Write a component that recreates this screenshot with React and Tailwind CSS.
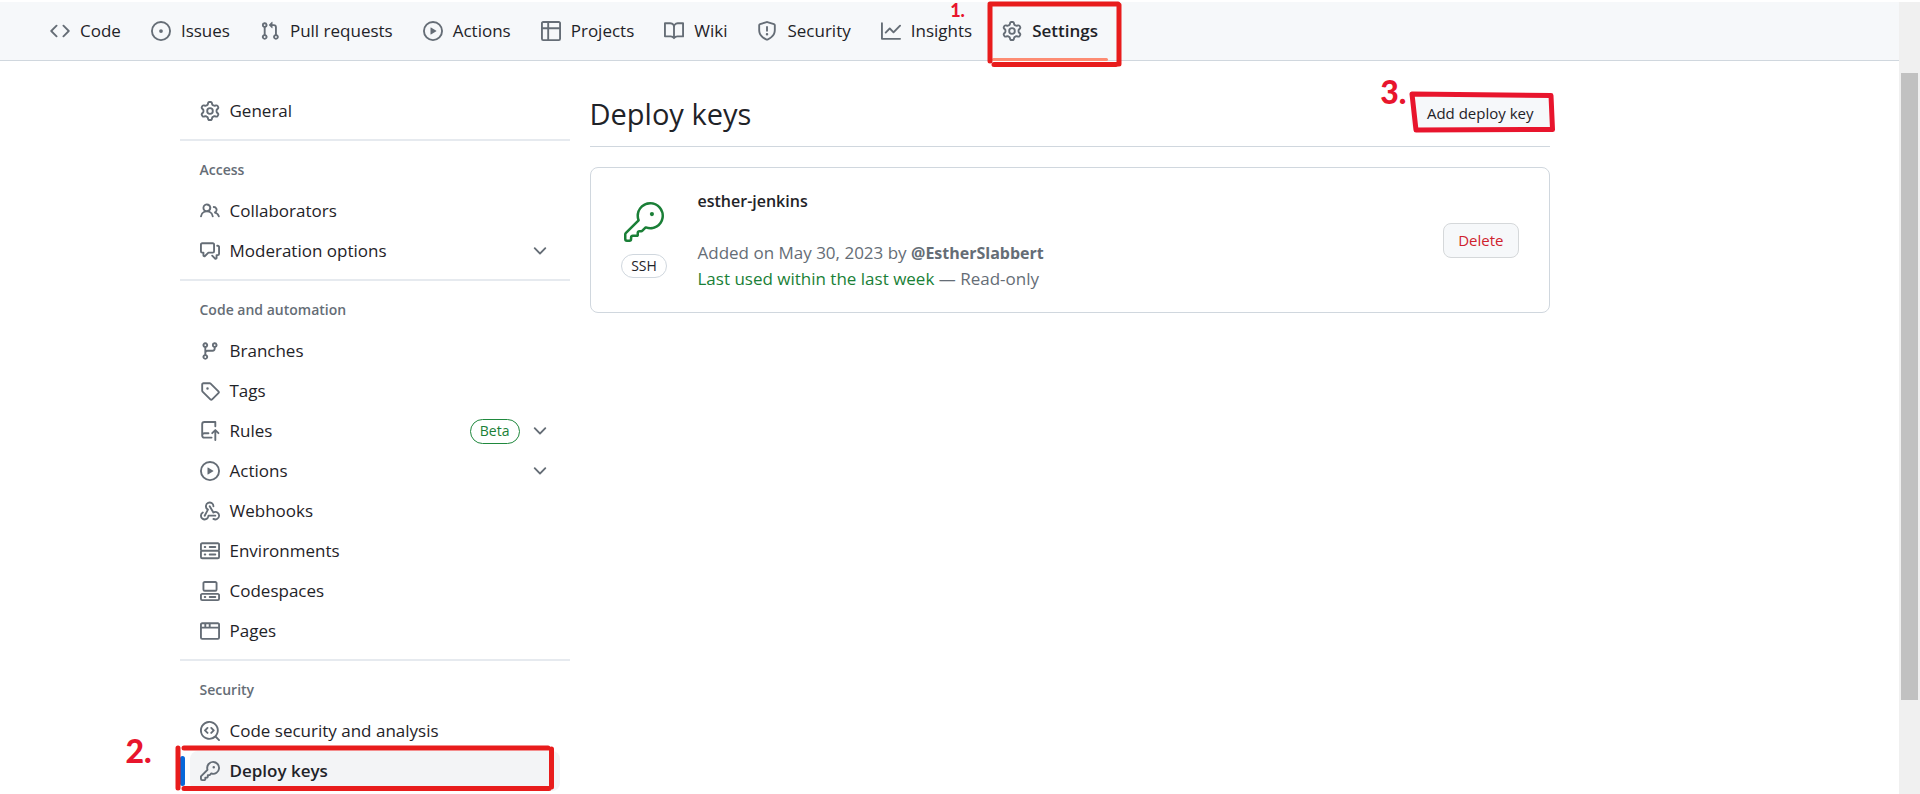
import { GoKey } from "react-icons/go";

const ICONS = {
  code: "m11.28 3.22 4.25 4.25a.75.75 0 0 1 0 1.06l-4.25 4.25a.749.749 0 0 1-1.275-.326.749.749 0 0 1 .215-.734L13.94 8l-3.72-3.72a.749.749 0 0 1 .326-1.275.749.749 0 0 1 .734.215Zm-6.56 0a.751.751 0 0 1 1.042.018.751.751 0 0 1 .018 1.042L2.06 8l3.72 3.72a.749.749 0 0 1-.326 1.275.749.749 0 0 1-.734-.215L.47 8.53a.75.75 0 0 1 0-1.06Z",
  issue: "M8 9.5a1.5 1.5 0 1 0 0-3 1.5 1.5 0 0 0 0 3Z M8 0a8 8 0 1 1 0 16A8 8 0 0 1 8 0ZM1.5 8a6.5 6.5 0 1 0 13 0 6.5 6.5 0 0 0-13 0Z",
  pull: "M1.5 3.25a2.25 2.25 0 1 1 3 2.122v5.256a2.251 2.251 0 1 1-1.5 0V5.372A2.25 2.25 0 0 1 1.5 3.25Zm5.677-.177L9.573.677A.25.25 0 0 1 10 .854V2.5h1A2.5 2.5 0 0 1 13.5 5v5.628a2.251 2.251 0 1 1-1.5 0V5a1 1 0 0 0-1-1h-1v1.646a.25.25 0 0 1-.427.177L7.177 3.427a.25.25 0 0 1 0-.354ZM3.75 2.5a.75.75 0 1 0 0 1.5.75.75 0 0 0 0-1.5Zm0 9.5a.75.75 0 1 0 0 1.5.75.75 0 0 0 0-1.5Zm8.25.75a.75.75 0 1 0 1.5 0 .75.75 0 0 0-1.5 0Z",
  play: "M8 0a8 8 0 1 1 0 16A8 8 0 0 1 8 0ZM1.5 8a6.5 6.5 0 1 0 13 0 6.5 6.5 0 0 0-13 0Zm4.879-2.773 4.264 2.559a.25.25 0 0 1 0 .428l-4.264 2.559A.25.25 0 0 1 6 10.559V5.442a.25.25 0 0 1 .379-.215Z",
  table: "M0 1.75C0 .784.784 0 1.75 0h12.5C15.216 0 16 .784 16 1.75v12.5A1.75 1.75 0 0 1 14.25 16H1.75A1.75 1.75 0 0 1 0 14.25ZM6.5 6.5v8h7.75a.25.25 0 0 0 .25-.25V6.5Zm8-1.5V1.75a.25.25 0 0 0-.25-.25H6.5V5Zm-13 1.5v7.75c0 .138.112.25.25.25H5v-8ZM5 5V1.5H1.75a.25.25 0 0 0-.25.25V5Z",
  book: "M0 1.75A.75.75 0 0 1 .75 1h4.253c1.227 0 2.317.59 3 1.501A3.743 3.743 0 0 1 11.006 1h4.245a.75.75 0 0 1 .75.75v10.5a.75.75 0 0 1-.75.75h-4.507a2.25 2.25 0 0 0-1.591.659l-.622.621a.75.75 0 0 1-1.06 0l-.622-.621A2.25 2.25 0 0 0 5.258 13H.75a.75.75 0 0 1-.75-.75Zm7.251 10.324.004-5.073-.002-2.253A2.25 2.25 0 0 0 5.003 2.5H1.5v9h3.757a3.75 3.75 0 0 1 1.994.574ZM8.755 4.75l-.004 7.322a3.752 3.752 0 0 1 1.992-.572H14.5v-9h-3.495a2.25 2.25 0 0 0-2.25 2.25Z",
  shield: "M7.467.133a1.748 1.748 0 0 1 1.066 0l5.25 1.68A1.75 1.75 0 0 1 15 3.48V7c0 1.566-.32 3.182-1.303 4.682-.983 1.498-2.585 2.813-5.032 3.855a1.697 1.697 0 0 1-1.33 0c-2.447-1.042-4.049-2.357-5.032-3.855C1.32 10.182 1 8.566 1 7V3.48a1.75 1.75 0 0 1 1.217-1.667Zm.61 1.429a.25.25 0 0 0-.153 0l-5.25 1.68a.25.25 0 0 0-.174.238V7c0 1.358.275 2.666 1.057 3.86.784 1.194 2.121 2.34 4.366 3.297a.196.196 0 0 0 .154 0c2.245-.956 3.582-2.104 4.366-3.298C13.225 9.666 13.5 8.36 13.5 7V3.48a.251.251 0 0 0-.174-.237l-5.25-1.68ZM8.75 4.75v3a.75.75 0 0 1-1.5 0v-3a.75.75 0 0 1 1.5 0ZM9 10.5a1 1 0 1 1-2 0 1 1 0 0 1 2 0Z",
  graph: "M1.5 1.75V13.5h13.75a.75.75 0 0 1 0 1.5H.75a.75.75 0 0 1-.75-.75V1.75a.75.75 0 0 1 1.5 0Zm14.28 2.53-5.25 5.25a.75.75 0 0 1-1.06 0L7 7.06 4.28 9.78a.751.751 0 0 1-1.042-.018.751.751 0 0 1-.018-1.042l3.25-3.25a.75.75 0 0 1 1.06 0L10 7.94l4.72-4.72a.751.751 0 0 1 1.042.018.751.751 0 0 1 .018 1.042Z",
  gear: "M8 0a8.2 8.2 0 0 1 .701.031C9.444.095 9.99.645 10.16 1.29l.288 1.107c.018.066.079.158.212.224.231.114.454.243.668.386.123.082.233.09.299.071l1.103-.303c.644-.176 1.392.021 1.82.63.27.385.506.792.704 1.218.315.675.111 1.422-.364 1.891l-.814.806c-.049.048-.098.147-.088.294.016.257.016.515 0 .772-.01.147.038.246.088.294l.814.806c.475.469.679 1.216.364 1.891a7.977 7.977 0 0 1-.704 1.217c-.428.61-1.176.807-1.82.63l-1.102-.302c-.067-.019-.177-.011-.3.071a5.909 5.909 0 0 1-.668.386c-.133.066-.194.158-.211.224l-.29 1.106c-.168.646-.715 1.196-1.458 1.26a8.006 8.006 0 0 1-1.402 0c-.743-.064-1.289-.614-1.458-1.26l-.289-1.106c-.018-.066-.079-.158-.212-.224a5.738 5.738 0 0 1-.668-.386c-.123-.082-.233-.09-.299-.071l-1.103.303c-.644.176-1.392-.021-1.82-.63a8.12 8.12 0 0 1-.704-1.218c-.315-.675-.111-1.422.363-1.891l.815-.806c.05-.048.098-.147.088-.294a6.214 6.214 0 0 1 0-.772c.01-.147-.038-.246-.088-.294l-.815-.806C.635 6.045.431 5.298.746 4.623a7.92 7.92 0 0 1 .704-1.217c.428-.61 1.176-.807 1.82-.63l1.102.302c.067.019.177.011.3-.071.214-.143.437-.272.668-.386.133-.066.194-.158.211-.224l.29-1.106C6.009.645 6.556.095 7.299.03 7.53.01 7.764 0 8 0Zm-.571 1.525c-.036.003-.108.036-.137.146l-.289 1.105c-.147.561-.549.967-.998 1.189-.173.086-.34.183-.5.29-.417.278-.97.423-1.529.27l-1.103-.303c-.109-.03-.175.016-.195.045-.22.312-.412.644-.573.99-.014.031-.021.11.059.19l.815.806c.411.406.562.957.53 1.456a4.709 4.709 0 0 0 0 .582c.032.499-.119 1.05-.53 1.456l-.815.806c-.081.08-.073.159-.059.19.162.346.353.677.573.989.02.03.085.076.195.046l1.102-.303c.56-.153 1.113-.008 1.53.27.161.107.328.204.501.29.447.222.85.629.997 1.189l.289 1.105c.029.109.101.143.137.146a6.6 6.6 0 0 0 1.142 0c.036-.003.108-.036.137-.146l.289-1.105c.147-.561.549-.967.998-1.189.173-.086.34-.183.5-.29.417-.278.97-.423 1.529-.27l1.103.303c.109.029.175-.016.195-.045.22-.313.411-.644.573-.99.014-.031.021-.11-.059-.19l-.815-.806c-.411-.406-.562-.957-.53-1.456a4.709 4.709 0 0 0 0-.582c-.032-.499.119-1.05.53-1.456l.815-.806c.081-.08.073-.159.059-.19a6.464 6.464 0 0 0-.573-.989c-.02-.03-.085-.076-.195-.046l-1.102.303c-.56.153-1.113.008-1.53-.27a4.44 4.44 0 0 0-.501-.29c-.447-.222-.85-.629-.997-1.189l-.289-1.105c-.029-.11-.101-.143-.137-.146a6.6 6.6 0 0 0-1.142 0ZM11 8a3 3 0 1 1-6 0 3 3 0 0 1 6 0ZM9.5 8a1.5 1.5 0 1 0-3.001.001A1.5 1.5 0 0 0 9.5 8Z",
  people: "M2 5.5a3.5 3.5 0 1 1 5.898 2.549 5.508 5.508 0 0 1 3.034 4.084.75.75 0 1 1-1.482.235 4 4 0 0 0-7.9 0 .75.75 0 0 1-1.482-.236A5.507 5.507 0 0 1 3.102 8.05 3.493 3.493 0 0 1 2 5.5ZM11 4a3.001 3.001 0 0 1 2.22 5.018 5.01 5.01 0 0 1 2.56 3.012.749.749 0 0 1-.885.954.752.752 0 0 1-.549-.514 3.507 3.507 0 0 0-2.522-2.372.75.75 0 0 1-.574-.73v-.352a.75.75 0 0 1 .416-.672A1.5 1.5 0 0 0 11 5.5.75.75 0 0 1 11 4Zm-5.5-.5a2 2 0 1 0-.001 3.999A2 2 0 0 0 5.5 3.5Z",
  discussion: "M1.75 1h8.5c.966 0 1.75.784 1.75 1.75v5.5A1.75 1.75 0 0 1 10.25 10H7.061l-2.574 2.573A1.458 1.458 0 0 1 2 11.543V10h-.25A1.75 1.75 0 0 1 0 8.25v-5.5C0 1.784.784 1 1.75 1ZM1.5 2.75v5.5c0 .138.112.25.25.25h1a.75.75 0 0 1 .75.75v2.19l2.72-2.72a.749.749 0 0 1 .53-.22h3.5a.25.25 0 0 0 .25-.25v-5.5a.25.25 0 0 0-.25-.25h-8.5a.25.25 0 0 0-.25.25Zm13 2a.25.25 0 0 0-.25-.25h-.5a.75.75 0 0 1 0-1.5h.5c.966 0 1.75.784 1.75 1.75v5.5A1.75 1.75 0 0 1 14.25 12H14v1.543a1.458 1.458 0 0 1-2.487 1.03L9.22 12.28a.749.749 0 0 1 .326-1.275.749.749 0 0 1 .734.215l2.22 2.22v-2.19a.75.75 0 0 1 .75-.75h1a.25.25 0 0 0 .25-.25Z",
  branch: "M9.5 3.25a2.25 2.25 0 1 1 3 2.122V6A2.5 2.5 0 0 1 10 8.5H6a1 1 0 0 0-1 1v1.128a2.251 2.251 0 1 1-1.5 0V5.372a2.25 2.25 0 1 1 1.5 0v1.836A2.493 2.493 0 0 1 6 7h4a1 1 0 0 0 1-1v-.628A2.25 2.25 0 0 1 9.5 3.25Zm-6 0a.75.75 0 1 0 1.5 0 .75.75 0 0 0-1.5 0Zm8.25-.75a.75.75 0 1 0 0 1.5.75.75 0 0 0 0-1.5ZM4.25 12a.75.75 0 1 0 0 1.5.75.75 0 0 0 0-1.5Z",
  tag: "M1 7.775V2.75C1 1.784 1.784 1 2.75 1h5.025c.464 0 .91.184 1.238.513l6.25 6.25a1.75 1.75 0 0 1 0 2.474l-5.026 5.026a1.75 1.75 0 0 1-2.474 0l-6.25-6.25A1.752 1.752 0 0 1 1 7.775Zm1.5 0c0 .066.026.13.073.177l6.25 6.25a.25.25 0 0 0 .354 0l5.025-5.025a.25.25 0 0 0 0-.354l-6.25-6.25a.25.25 0 0 0-.177-.073H2.75a.25.25 0 0 0-.25.25ZM6 5a1 1 0 1 1 0 2 1 1 0 0 1 0-2Z",
  push: "M1 2.5A2.5 2.5 0 0 1 3.5 0h8.75a.75.75 0 0 1 .75.75v3.5a.75.75 0 0 1-1.5 0V1.5h-8a1 1 0 0 0-1 1v6.708A2.493 2.493 0 0 1 3.5 9h3.25a.75.75 0 0 1 0 1.5H3.5a1 1 0 0 0 0 2h5.75a.75.75 0 0 1 0 1.5H3.5A2.5 2.5 0 0 1 1 11.5Zm13.23 7.79h-.001l-1.224-1.224v6.184a.75.75 0 0 1-1.5 0V9.066L10.28 10.29a.75.75 0 0 1-1.06-1.061l2.505-2.504a.75.75 0 0 1 1.06 0L15.29 9.23a.751.751 0 0 1-.018 1.042.751.751 0 0 1-1.042.018Z",
  webhook: "M5.5 4.25a2.25 2.25 0 0 1 4.5 0 .75.75 0 0 0 1.5 0 3.75 3.75 0 1 0-6.14 2.889l-2.272 4.258a.75.75 0 0 0 1.324.706L7 7.25a.75.75 0 0 0-.309-1.015A2.25 2.25 0 0 1 5.5 4.25Z M7.364 3.607a.75.75 0 0 1 1.03.257l2.608 4.349a3.75 3.75 0 1 1-.628 6.785.75.75 0 0 1 .752-1.299 2.25 2.25 0 1 0-.033-3.88.75.75 0 0 1-1.03-.256L7.107 4.636a.75.75 0 0 1 .257-1.03Z M2.9 8.776A.75.75 0 0 1 2.625 9.8 2.25 2.25 0 1 0 6 11.75a.75.75 0 0 1 .75-.751h5.5a.75.75 0 0 1 0 1.5H7.425a3.751 3.751 0 1 1-5.55-3.998.75.75 0 0 1 1.024.274Z",
  server: "M1.75 1h12.5c.966 0 1.75.784 1.75 1.75v4c0 .372-.116.717-.314 1 .198.283.314.628.314 1v4a1.75 1.75 0 0 1-1.75 1.75H1.75A1.75 1.75 0 0 1 0 12.75v-4c0-.358.109-.707.314-1a1.739 1.739 0 0 1-.314-1v-4C0 1.784.784 1 1.75 1ZM1.5 2.75v4c0 .138.112.25.25.25h12.5a.25.25 0 0 0 .25-.25v-4a.25.25 0 0 0-.25-.25H1.75a.25.25 0 0 0-.25.25Zm.25 5.75a.25.25 0 0 0-.25.25v4c0 .138.112.25.25.25h12.5a.25.25 0 0 0 .25-.25v-4a.25.25 0 0 0-.25-.25ZM7 4.75A.75.75 0 0 1 7.75 4h4.5a.75.75 0 0 1 0 1.5h-4.5A.75.75 0 0 1 7 4.75ZM7.75 10h4.5a.75.75 0 0 1 0 1.5h-4.5a.75.75 0 0 1 0-1.5ZM3 4.75A.75.75 0 0 1 3.75 4h.5a.75.75 0 0 1 0 1.5h-.5A.75.75 0 0 1 3 4.75ZM3.75 10h.5a.75.75 0 0 1 0 1.5h-.5a.75.75 0 0 1 0-1.5Z",
  codespaces: "M0 11.25c0-.966.784-1.75 1.75-1.75h12.5c.966 0 1.75.784 1.75 1.75v3A1.75 1.75 0 0 1 14.25 16H1.75A1.75 1.75 0 0 1 0 14.25Zm2-9.5C2 .784 2.784 0 3.75 0h8.5C13.216 0 14 .784 14 1.75v5a1.75 1.75 0 0 1-1.75 1.75h-8.5A1.75 1.75 0 0 1 2 6.75Zm1.75-.25a.25.25 0 0 0-.25.25v5c0 .138.112.25.25.25h8.5a.25.25 0 0 0 .25-.25v-5a.25.25 0 0 0-.25-.25Zm-2 9.5a.25.25 0 0 0-.25.25v3c0 .138.112.25.25.25h12.5a.25.25 0 0 0 .25-.25v-3a.25.25 0 0 0-.25-.25Z M7 12.75a.75.75 0 0 1 .75-.75h4.5a.75.75 0 0 1 0 1.5h-4.5a.75.75 0 0 1-.75-.75Zm-4 0a.75.75 0 0 1 .75-.75h.5a.75.75 0 0 1 0 1.5h-.5a.75.75 0 0 1-.75-.75Z",
  browser: "M0 2.75C0 1.784.784 1 1.75 1h12.5c.966 0 1.75.784 1.75 1.75v10.5A1.75 1.75 0 0 1 14.25 15H1.75A1.75 1.75 0 0 1 0 13.25ZM14.5 6h-13v7.25c0 .138.112.25.25.25h12.5a.25.25 0 0 0 .25-.25Zm-6-3.5v2h6V2.75a.25.25 0 0 0-.25-.25ZM5 2.5v2h2v-2Zm-3.25 0a.25.25 0 0 0-.25.25V4.5h2v-2Z",
  codescan: "M8.47 4.97a.75.75 0 0 0 0 1.06L9.94 7.5 8.47 8.97a.75.75 0 1 0 1.06 1.06l2-2a.75.75 0 0 0 0-1.06l-2-2a.75.75 0 0 0-1.06 0ZM6.53 6.03a.75.75 0 0 0-1.06-1.06l-2 2a.75.75 0 0 0 0 1.06l2 2a.75.75 0 1 0 1.06-1.06L5.06 7.5l1.47-1.47Z M12.246 13.307a7.501 7.501 0 1 1 1.06-1.06l2.474 2.473a.749.749 0 0 1-.326 1.275.749.749 0 0 1-.734-.215ZM1.5 7.5a6.002 6.002 0 0 0 3.608 5.504 6.002 6.002 0 0 0 6.486-1.117.748.748 0 0 1 .292-.293A6 6 0 1 0 1.5 7.5Z",
  key: "M10.5 0a5.499 5.499 0 1 1-1.288 10.848l-.932.932a.749.749 0 0 1-.53.22H7v.75a.749.749 0 0 1-.22.53l-.5.5a.749.749 0 0 1-.53.22H5v.75a.749.749 0 0 1-.22.53l-.5.5a.749.749 0 0 1-.53.22h-2A1.75 1.75 0 0 1 0 14.25v-2c0-.199.079-.389.22-.53l4.932-4.932A5.5 5.5 0 0 1 10.5 0Zm-4 5.5c-.001.431.069.86.205 1.269a.75.75 0 0 1-.181.768L1.5 12.56v1.69c0 .138.112.25.25.25h1.69l.06-.06v-1.19a.75.75 0 0 1 .75-.75h1.19l.06-.06v-1.19a.75.75 0 0 1 .75-.75h1.19l1.023-1.025a.75.75 0 0 1 .768-.18A4 4 0 1 0 6.5 5.5ZM11 6a1 1 0 1 1 0-2 1 1 0 0 1 0 2Z",
  chevron: "M12.78 5.22a.749.749 0 0 1 0 1.06l-4.25 4.25a.749.749 0 0 1-1.06 0L3.22 6.28a.749.749 0 1 1 1.06-1.06L8 8.939l3.72-3.719a.749.749 0 0 1 1.06 0Z",
};

function Icon({ name }) {
  return (
    <svg viewBox="0 0 16 16" className="size-5 shrink-0 fill-[#656d76]" aria-hidden="true">
      <path d={ICONS[name]} />
    </svg>
  );
}

const TABS = [
  ["code", "Code"],
  ["issue", "Issues"],
  ["pull", "Pull requests"],
  ["play", "Actions"],
  ["table", "Projects"],
  ["book", "Wiki"],
  ["shield", "Security"],
  ["graph", "Insights"],
];

const SECTIONS = [
  {
    title: "Access",
    items: [
      { icon: "people", label: "Collaborators" },
      { icon: "discussion", label: "Moderation options", expandable: true },
    ],
  },
  {
    title: "Code and automation",
    items: [
      { icon: "branch", label: "Branches" },
      { icon: "tag", label: "Tags" },
      { icon: "push", label: "Rules", expandable: true, badge: "Beta" },
      { icon: "play", label: "Actions", expandable: true },
      { icon: "webhook", label: "Webhooks" },
      { icon: "server", label: "Environments" },
      { icon: "codespaces", label: "Codespaces" },
      { icon: "browser", label: "Pages" },
    ],
  },
  {
    title: "Security",
    items: [
      { icon: "codescan", label: "Code security and analysis" },
      { icon: "key", label: "Deploy keys", current: true },
    ],
  },
];

function StepNumber({ children, className }) {
  return (
    <span className={"pointer-events-none absolute font-['Lato'] leading-none font-black text-[#e8152d] " + className}>
      {children}
    </span>
  );
}

function SideItem({ icon, label, expandable, badge, current }) {
  const row = "flex h-10 w-full items-center gap-[10px] rounded-lg px-[10px] text-left";
  if (expandable) {
    return (
      <li className="px-[10px]">
        <button type="button" aria-expanded="false" className={row}>
          <Icon name={icon} />
          <span className="flex-1">{label}</span>
          {badge && (
            <span className="flex h-[25px] items-center rounded-full border border-[#1f883d] px-[9px] text-sm font-medium text-[#1a7f37]">
              {badge}
            </span>
          )}
          <Icon name="chevron" />
        </button>
      </li>
    );
  }
  return (
    <li className="relative px-[10px]">
      {current && <span className="absolute top-[5px] left-0 h-[30px] w-[5px] rounded-full bg-[#0969da]" />}
      <a
        href="#"
        aria-current={current ? "page" : undefined}
        className={current ? row + " bg-[#f3f4f6] font-semibold" : row}
      >
        <Icon name={icon} />
        <span>{label}</span>
      </a>
      {current && (
        <>
          <svg
            viewBox="0 0 380 48"
            className="pointer-events-none absolute -top-[7px] -left-[5px] h-12 w-[380px] fill-none stroke-[#e81c1c] stroke-[5] [stroke-linecap:round]"
            aria-hidden="true"
          >
            <path d="M3 4V44M9 4H373M376.500 5V43M9 44.500H374" />
          </svg>
          <StepNumber className="-top-4 -left-[54px] text-[32px]">2.</StepNumber>
        </>
      )}
    </li>
  );
}

function Divider() {
  return <hr className="mt-2 mb-[10px] h-[2px] border-0 bg-[#e6eaef]" />;
}

export default function App() {
  return (
    <div className="flex min-h-screen bg-white pt-[2px] font-['Open_Sans','Noto_Sans',sans-serif] text-[17px] text-[#1f2328]">
      <div className="min-w-0 flex-1">
        <header className="border-b border-[#d0d7de] bg-[#f6f8fa]">
          <nav aria-label="Repository" className="flex h-[58px] items-center gap-[10px] px-10">
            {TABS.map(([icon, label]) => (
              <a key={label} href="#" className="flex items-center gap-[10px] px-[10px] whitespace-nowrap">
                <Icon name={icon} />
                {label}
              </a>
            ))}
            <a
              href="#"
              aria-current="page"
              className="relative flex h-full items-center gap-[10px] px-[10px] font-semibold whitespace-nowrap"
            >
              <Icon name="gear" />
              Settings
              <span className="absolute -bottom-px left-0 h-[3px] w-full rounded-full bg-[#fd8c73]" />
              <svg
                viewBox="0 0 136 68"
                className="pointer-events-none absolute -top-[2px] -left-[5px] h-[68px] w-[136px] fill-none stroke-[#e81c1c] stroke-[5] [stroke-linecap:round]"
                aria-hidden="true"
              >
                <path d="M3 5V61M3 4H131M132 5V64M7 64.500H129" />
              </svg>
              <StepNumber className="-top-[1px] -left-[42px] text-[18px]">1.</StepNumber>
            </a>
          </nav>
        </header>

        <div className="mx-auto flex max-w-[1600px] items-start gap-5 px-[30px]">
          <nav aria-label="Settings" className="w-[390px] shrink-0 pt-[30px]">
            <ul>
              <SideItem icon="gear" label="General" />
            </ul>
            {SECTIONS.map((section) => (
              <section key={section.title}>
                <Divider />
                <h3 className="flex h-10 items-center px-5 pb-[2px] text-sm font-semibold text-[#656d76]">
                  {section.title}
                </h3>
                <ul>
                  {section.items.map((item) => (
                    <SideItem key={item.label} {...item} />
                  ))}
                </ul>
              </section>
            ))}
          </nav>

          <main className="max-w-[960px] min-w-0 flex-1 pt-[30px]">
            <div className="mb-5 flex h-14 items-start justify-between border-b border-[#d0d7de]">
              <h2 className="text-[29px] leading-[46px]">Deploy keys</h2>
              <div className="relative mt-[5px]">
                <button type="button" className="h-[35px] rounded-lg bg-[#f6f8fa] px-[16px] text-[15px] font-medium">
                  Add deploy key
                </button>
                <svg
                  viewBox="0 0 146 42"
                  className="pointer-events-none absolute -top-[5px] -right-[5px] h-[42px] w-[146px] fill-none stroke-[#e8152d] stroke-[5] [stroke-linejoin:round]"
                  aria-hidden="true"
                >
                  <path d="M3 3 142 4.500 143.500 38.500 7 39Z" />
                </svg>
                <StepNumber className="-top-[20px] right-[143px] text-[32px]">3.</StepNumber>
              </div>
            </div>

            <ul className="rounded-lg border border-[#d0d7de]">
              <li className="flex items-center px-[30px] py-5">
                <div className="flex w-[47px] flex-col items-center gap-3">
                  <GoKey className="size-10 text-[#1a7f37]" aria-hidden="true" />
                  <span className="flex h-6 items-center rounded-full border border-[#d0d7de] px-[9px] text-sm font-medium">
                    SSH
                  </span>
                </div>
                <div className="ml-[30px] flex-1 leading-[26px]">
                  <strong className="block text-base leading-[26px] font-semibold">esther-jenkins</strong>
                  <p className="mt-[26px] text-[#656d76]">
                    Added on May 30, 2023 by{" "}
                    <a href="#" className="text-base font-bold">
                      @EstherSlabbert
                    </a>
                  </p>
                  <p className="text-[#656d76]">
                    <span className="text-[#1a7f37]">Last used within the last week</span> — Read-only
                  </p>
                </div>
                <button
                  type="button"
                  className="h-[35px] rounded-lg border border-[#d5d8da] bg-[#f6f8fa] px-[14px] text-[15px] font-medium text-[#cf222e]"
                >
                  Delete
                </button>
              </li>
            </ul>
          </main>
        </div>
      </div>

      <div className="w-[21px] shrink-0 bg-[#f0f0f0] px-[2px] pt-[71px]" aria-hidden="true">
        <div className="h-[79vh] bg-[#c1c1c1]" />
      </div>
    </div>
  );
}
